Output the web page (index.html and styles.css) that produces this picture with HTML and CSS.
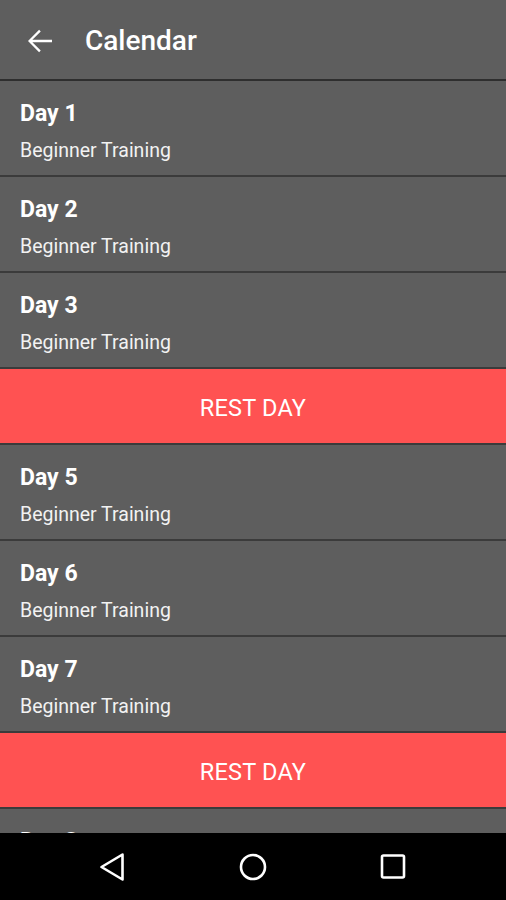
FILE: index.html
```html
<!DOCTYPE html>
<html lang="en">
<head>
<meta charset="utf-8">
<title>Calendar</title>
<link rel="stylesheet" href="styles.css">
</head>
<body>
<div class="screen">
  <header class="appbar">
    <svg class="back" viewBox="0 0 24 24" width="36" height="36"><path fill="#fff" d="M20 11.2H6.9l5.6-5.6L11.4 4.5 4 12l7.4 7.5 1.1-1.1-5.6-5.6H20z"/></svg>
    <h1 class="title">Calendar</h1>
  </header>
  <main class="list">
    <div class="day"><div class="day-name">Day 1</div><div class="day-sub">Beginner Training</div></div>
    <div class="day"><div class="day-name">Day 2</div><div class="day-sub">Beginner Training</div></div>
    <div class="day"><div class="day-name">Day 3</div><div class="day-sub">Beginner Training</div></div>
    <div class="rest">REST DAY</div>
    <div class="day"><div class="day-name">Day 5</div><div class="day-sub">Beginner Training</div></div>
    <div class="day"><div class="day-name">Day 6</div><div class="day-sub">Beginner Training</div></div>
    <div class="day"><div class="day-name">Day 7</div><div class="day-sub">Beginner Training</div></div>
    <div class="rest">REST DAY</div>
    <div class="day"><div class="day-name">Day 8</div><div class="day-sub">Beginner Training</div></div>
  </main>
  <nav class="navbar">
    <div class="nav-cell"><svg width="30" height="30" viewBox="0 0 30 30"><path d="M24.5 2.5 L3.5 15 L24.5 27.5 Z" fill="none" stroke="#fff" stroke-width="2.6" stroke-linejoin="round"/></svg></div>
    <div class="nav-cell"><svg width="30" height="30" viewBox="0 0 30 30"><circle cx="15" cy="15" r="12" fill="none" stroke="#fff" stroke-width="2.6"/></svg></div>
    <div class="nav-cell"><svg width="30" height="30" viewBox="0 0 30 30"><rect x="4" y="3.5" width="22" height="22" rx="1.5" fill="none" stroke="#fff" stroke-width="2.6"/></svg></div>
  </nav>
</div>
</body>
</html>
```
FILE: styles.css
```css
* { box-sizing: border-box; }
html, body { margin: 0; padding: 0; }
body {
  width: 506px;
  height: 900px;
  overflow: hidden;
  background: #5e5e5e;
  font-family: Roboto, "Liberation Sans", sans-serif;
  color: #fff;
}
.screen {
  display: flex;
  flex-direction: column;
  height: 900px;
}
.appbar {
  flex: 0 0 81px;
  display: flex;
  align-items: center;
  padding-left: 22px;
  padding-top: 3px;
  background: #5e5e5e;
  border-bottom: 2px solid #2e2e2e;
}
.back { display: block; flex: 0 0 auto; }
.title {
  margin: 0 0 0 27px;
  font-size: 28px;
  font-weight: 500;
  line-height: 32px;
  color: #fff;
}
.list {
  flex: 1 1 auto;
  overflow: hidden;
  display: flex;
  flex-direction: column;
}
.day {
  flex: 0 0 96px;
  padding: 19px 20px 0;
  border-bottom: 2px solid #3b3b3b;
}
.day-name {
  font-size: 23px;
  font-weight: 700;
  line-height: 28px;
}
.day-sub {
  margin-top: 11px;
  font-size: 19.5px;
  line-height: 23px;
  color: #f2f2f2;
}
.rest {
  flex: 0 0 76px;
  display: flex;
  align-items: center;
  justify-content: center;
  background: #ff5252;
  border-bottom: 2px solid #3b3b3b;
  font-size: 23.5px;
  letter-spacing: 0.2px;
  padding-top: 4px;
}
.navbar {
  flex: 0 0 67px;
  background: #000;
  display: flex;
  justify-content: center;
  align-items: center;
  gap: 80px;
}
.nav-cell {
  width: 60px;
  display: flex;
  justify-content: center;
}
.nav-cell svg { display: block; }
```
